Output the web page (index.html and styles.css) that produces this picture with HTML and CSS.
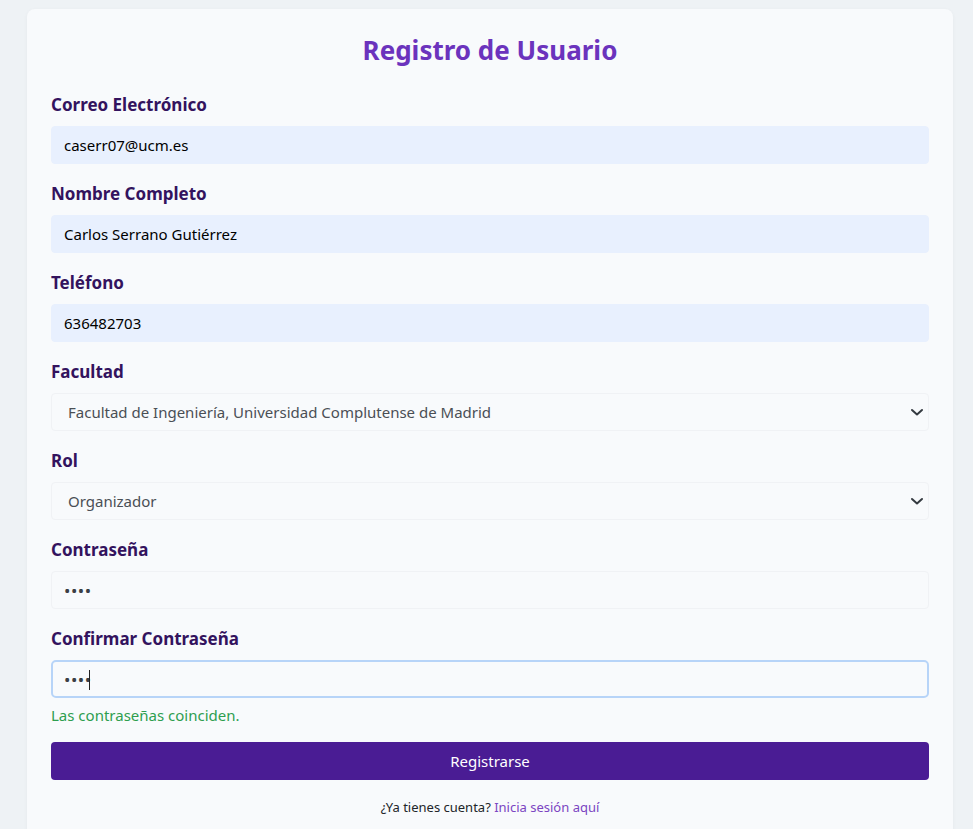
FILE: index.html
```html
<!DOCTYPE html>
<html lang="es">
<head>
<meta charset="utf-8">
<title>Registro de Usuario</title>
<link rel="stylesheet" href="styles.css">
</head>
<body>
<div class="card">
  <h1 class="title">Registro de Usuario</h1>
  <form class="form">
    <div class="group">
      <label class="label">Correo Electrónico</label>
      <input class="field autofill" type="email" value="caserr07@ucm.es">
    </div>
    <div class="group">
      <label class="label">Nombre Completo</label>
      <input class="field autofill" type="text" value="Carlos Serrano Gutiérrez">
    </div>
    <div class="group">
      <label class="label">Teléfono</label>
      <input class="field autofill" type="text" value="636482703">
    </div>
    <div class="group">
      <label class="label">Facultad</label>
      <div class="select-wrap">
        <select class="field select">
          <option>Facultad de Ingeniería, Universidad Complutense de Madrid</option>
        </select>
        <svg class="chev" width="14" height="10" viewBox="0 0 14 10"><path d="M2 3l5 4.5L12 3" fill="none" stroke="#343a40" stroke-width="2" stroke-linecap="round" stroke-linejoin="round"/></svg>
      </div>
    </div>
    <div class="group">
      <label class="label">Rol</label>
      <div class="select-wrap">
        <select class="field select">
          <option>Organizador</option>
        </select>
        <svg class="chev" width="14" height="10" viewBox="0 0 14 10"><path d="M2 3l5 4.5L12 3" fill="none" stroke="#343a40" stroke-width="2" stroke-linecap="round" stroke-linejoin="round"/></svg>
      </div>
    </div>
    <div class="group">
      <label class="label">Contraseña</label>
      <input class="field pass" type="password" value="1234">
    </div>
    <div class="group last">
      <label class="label">Confirmar Contraseña</label>
      <div class="focus-wrap">
        <input class="field pass focused" type="password" value="1234">
        <span class="caret"></span>
      </div>
      <div class="match">Las contraseñas coinciden.</div>
    </div>
    <button class="btn" type="button">Registrarse</button>
    <p class="footer">¿Ya tienes cuenta? <a class="link" href="#">Inicia sesión aquí</a></p>
  </form>
</div>
</body>
</html>
```
FILE: styles.css
```css
* { box-sizing: border-box; }
html, body { margin: 0; padding: 0; }
body {
  background: #eef2f5;
  font-family: "Noto Sans", "Open Sans", sans-serif;
  height: 829px;
  overflow: hidden;
}
.card {
  margin: 9px 0 0 27px;
  width: 926px;
  background: #f8fafc;
  border-radius: 8px;
  padding: 24px 24px 40px;
  box-shadow: 0 1px 4px rgba(0,0,0,0.04);
}
.title {
  margin: 0 0 25px;
  text-align: center;
  font-size: 26px;
  line-height: 34px;
  font-weight: 700;
  color: #6b33bd;
}
.form { display: flex; flex-direction: column; }
.group { display: flex; flex-direction: column; margin-bottom: 17px; }
.group.last { margin-bottom: 0; }
.label {
  font-size: 17px;
  line-height: 24px;
  padding-top: 1px;
  font-weight: 700;
  color: #33135e;
  margin-bottom: 9px;
}
.field {
  width: 100%;
  height: 38px;
  border: 1px solid #f0f2f5;
  border-radius: 4px;
  background: #f8fafc;
  padding: 0 12px;
  font-family: inherit;
  font-size: 15px;
  color: #212529;
  outline: none;
}
.pass { font-size: 17px; letter-spacing: 0.5px; color: #3a3f45; }
.autofill { background: #e8f0fe; border-color: #e8f0fe; color: #000; }
.select-wrap { position: relative; }
.select {
  appearance: none;
  -webkit-appearance: none;
  padding-left: 16px;
  color: #4a4f55;
}
.chev { position: absolute; right: 5px; top: 14px; }
.focus-wrap { position: relative; }
.focused {
  border: 2px solid #b7d4f8;
  border-radius: 5px;
  padding-left: 11px;
  background: #f8fafc;
}
.caret {
  position: absolute;
  left: 38px;
  top: 10px;
  width: 1px;
  height: 20px;
  background: #222;
}
.match {
  margin-top: 8px;
  font-size: 15px;
  line-height: 18px;
  color: #2e9e4f;
}
.btn {
  margin-top: 18px;
  height: 38px;
  width: 100%;
  border: none;
  border-radius: 4px;
  background: #4a1c94;
  color: #fff;
  font-family: inherit;
  font-size: 15px;
}
.footer {
  margin: 18px 0 0;
  text-align: center;
  font-size: 13px;
  line-height: 18px;
  color: #212529;
}
.link { color: #7b45c2; text-decoration: none; }
```
